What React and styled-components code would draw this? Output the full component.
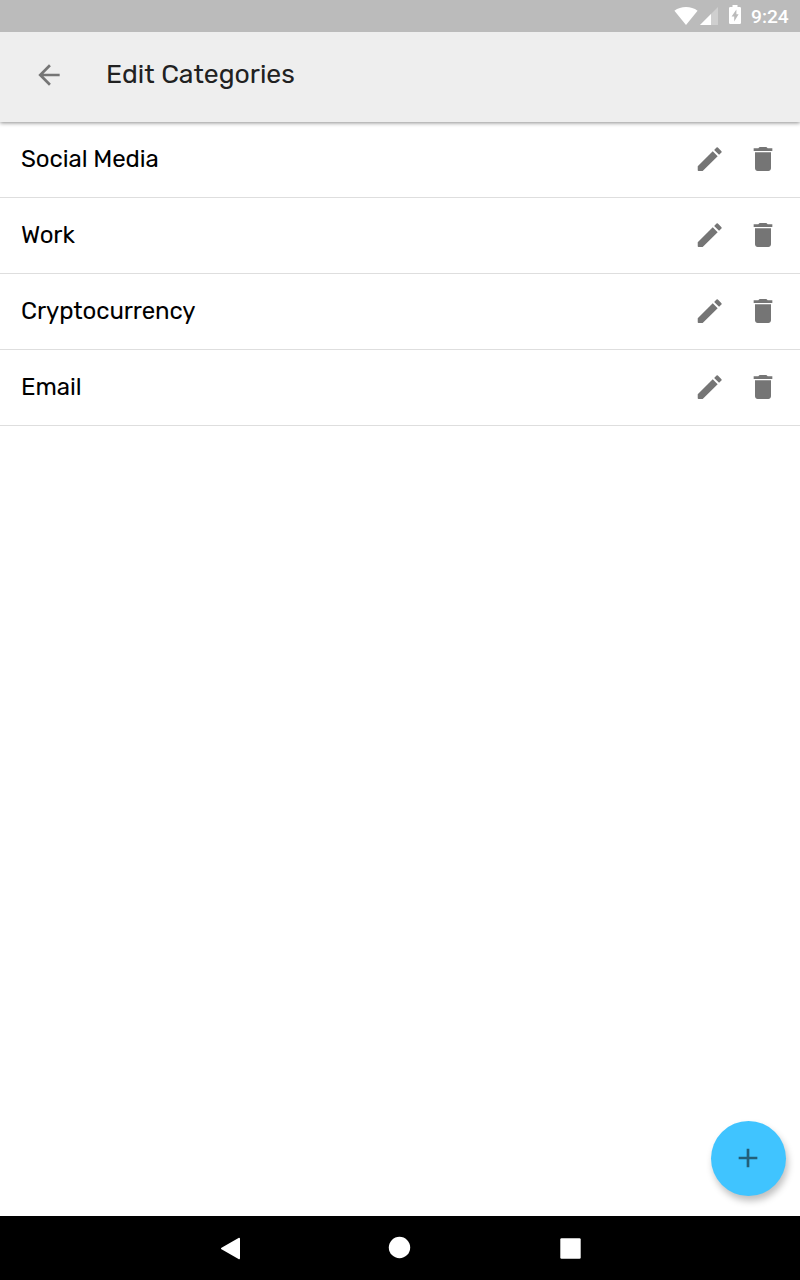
import React from 'react';
import styled, { createGlobalStyle } from 'styled-components';
import { MdArrowBack, MdAdd } from 'react-icons/md';

const GlobalStyle = createGlobalStyle`
  * { box-sizing: border-box; }
  body { margin: 0; background: #fff; font-family: Rubik, Roboto, sans-serif; }
  svg { display: block; flex: none; }
`;

const Screen = styled.div`
  position: relative;
  display: flex;
  flex-direction: column;
  width: 800px;
  height: 1280px;
  overflow: hidden;
  background: #fff;
`;

const StatusBar = styled.div`
  position: relative;
  z-index: 1;
  display: flex;
  justify-content: flex-end;
  height: 32px;
  flex: none;
  padding-right: 10.5px;
  background: #bbb;
  color: #fff;
`;

const StatusIcons = styled.svg`
  width: 72px;
  height: 32px;
  margin-right: 5px;
`;

const Clock = styled.span`
  width: 38.5px;
  font: 500 19.2px/34px Roboto, sans-serif;
  white-space: nowrap;
`;

const Toolbar = styled.header`
  position: relative;
  display: flex;
  flex: none;
  height: 90px;
  padding-left: 33px;
  background: #eee;
  box-shadow: 0 1px 4px rgba(0, 0, 0, 0.45);
`;

const IconButton = styled.button`
  display: flex;
  border: 0;
  padding: 0;
  margin: ${(p) => p.$margin || 0};
  background: none;
  color: #757575;
`;

const Title = styled.h1`
  margin: 0 0 0 41px;
  font-size: 26.6px;
  font-weight: 400;
  line-height: 85px;
  color: #212121;
`;

const List = styled.ul`
  flex: 1;
  margin: 0;
  padding: 0;
  list-style: none;
`;

const Row = styled.li`
  display: flex;
  height: 76px;
  padding: 0 21px;
  border-bottom: 1px solid #dedede;
`;

const Name = styled.span`
  flex: 1;
  font-size: 24px;
  line-height: 74px;
  letter-spacing: -0.07px;
  color: #000;
`;

const Fab = styled.button`
  position: absolute;
  left: 711px;
  top: 1121px;
  display: flex;
  align-items: center;
  justify-content: center;
  width: 75px;
  height: 75px;
  padding: 0 1px 1px 0;
  border: 0;
  border-radius: 50%;
  background: #40c4ff;
  color: #235f79;
  box-shadow: 2px 5px 7px rgba(0, 0, 0, 0.25);
`;

const NavBar = styled.nav`
  display: flex;
  flex: none;
  height: 64px;
  padding: 0 200px;
  background: #000;
`;

const PencilIcon = () => (
  <svg width="32" height="32" viewBox="0 0 24 24" fill="currentColor">
    <path d="M2.8 17.4 V20.4 Q2.8 21 3.4 21 H6.5 L17.75 9.94 L14.06 6.25 Z M20.6 7.1 Q21 6.6 20.6 6.1 L17.9 3.4 Q17.4 3 16.9 3.4 L15.1 5.2 L18.8 8.9 Z" />
  </svg>
);

const TrashIcon = () => (
  <svg width="32" height="32" viewBox="0 0 24 24" fill="currentColor">
    <path d="M6 19 c0 1.1.9 2 2 2 h8 c1.1 0 2-.9 2-2 V7 H6 Z M19 4 h-3.5 l-.7-.8 q-.2-.2-.5-.2 h-4.6 q-.3 0-.5.2 L8.5 4 H5 v2 h14 Z" />
  </svg>
);

const categories = ['Social Media', 'Work', 'Cryptocurrency', 'Email'];

export default function App() {
  return (
    <Screen>
      <GlobalStyle />
      <StatusBar>
        <StatusIcons viewBox="674 0 72 32" fill="#fff">
          <path d="M686 25 L674.4 10.8 C681 5.8 691 5.8 697.6 10.8 Z" />
          <path d="M718 7 V25 H700 Z" fillOpacity=".3" />
          <path d="M711 14 V25 H700 Z" />
          <path
            fillRule="evenodd"
            d="M732.5 5 h5 v2 h2.2 q1.3 0 1.3 1.3 v14.4 q0 1.3 -1.3 1.3 h-9.4 q-1.3 0 -1.3 -1.3 v-14.4 q0 -1.3 1.3 -1.3 h2.2 Z M736.4 9.4 L731.6 16.4 H734.2 V21.6 L738.6 14.3 H736.4 Z"
          />
        </StatusIcons>
        <Clock>9:24</Clock>
      </StatusBar>
      <Toolbar>
        <IconButton aria-label="Back" $margin="27px 0 0">
          <MdArrowBack size={32} />
        </IconButton>
        <Title>Edit Categories</Title>
      </Toolbar>
      <List>
        {categories.map((name) => (
          <Row key={name}>
            <Name>{name}</Name>
            <IconButton aria-label={`Edit ${name}`} $margin="21px 21px 0 0">
              <PencilIcon />
            </IconButton>
            <IconButton aria-label={`Delete ${name}`} $margin="21px 0 0 0">
              <TrashIcon />
            </IconButton>
          </Row>
        ))}
      </List>
      <NavBar>
        <svg width="400" height="64" viewBox="200 1216 400 64" fill="#fff">
          <path
            d="M239 1238.8 L222 1248.5 L239 1258.2 Z"
            stroke="#fff"
            strokeWidth="2"
            strokeLinejoin="round"
          />
          <circle cx="399.5" cy="1247.5" r="10.7" />
          <rect x="560.3" y="1238.3" width="20.4" height="20.4" rx="1.2" />
        </svg>
      </NavBar>
      <Fab aria-label="Add category">
        <MdAdd size={32} />
      </Fab>
    </Screen>
  );
}
